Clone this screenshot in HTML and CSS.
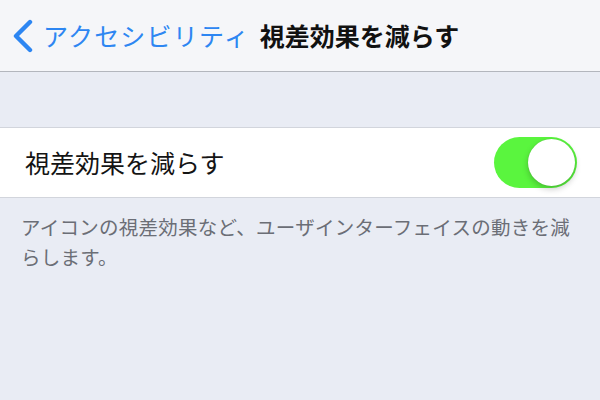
FILE: index.html
```html
<!DOCTYPE html>
<html lang="ja">
<head>
  <meta charset="UTF-8" />
  <meta name="viewport" content="width=device-width, initial-scale=1.0"/>
  <title>視差効果を減らす</title>
  <link rel="stylesheet" href="styles.css">
</head>
<body>
  <header class="navbar">
    <a class="back" href="#">
      <svg class="chevron" width="22" height="34" viewBox="0 0 22 34">
        <polyline points="18,3 4,17 18,31" fill="none" stroke="#2d86f2" stroke-width="4.4" stroke-linecap="round" stroke-linejoin="round"/>
      </svg>
      <span class="back-label">アクセシビリティ</span>
    </a>
    <h1 class="title">視差効果を減らす</h1>
  </header>
  <main>
    <div class="group">
      <div class="cell">
        <span class="cell-label">視差効果を減らす</span>
        <label class="switch">
          <input type="checkbox" checked>
          <span class="knob"></span>
        </label>
      </div>
    </div>
    <p class="footer-note">アイコンの視差効果など、ユーザインターフェイスの動きを減らします。</p>
  </main>
</body>
</html>
```

FILE: styles.css
```css
body {
  margin: 0;
  font-family: "Noto Sans CJK JP", "Noto Sans", sans-serif;
  background-color: #e9ecf4;
  color: #111;
  width: 600px;
  height: 400px;
  overflow: hidden;
}
.navbar {
  height: 72px;
  box-sizing: border-box;
  background-color: #f5f6f9;
  border-bottom: 1px solid #b3b6bd;
  display: flex;
  align-items: center;
  padding-left: 12px;
  gap: 10px;
}
.back {
  display: flex;
  align-items: center;
  gap: 9px;
  text-decoration: none;
  color: #2d86f2;
}
.chevron {
  display: block;
}
.back-label {
  font-size: 25px;
  line-height: 1;
  letter-spacing: 1.2px;
}
.title {
  margin: 0;
  font-size: 25px;
  font-weight: 700;
  line-height: 1;
  color: #111;
}
main {
  padding-top: 55px;
}
.group {
  background-color: white;
  border-top: 1px solid #d2d5dc;
  border-bottom: 1px solid #d2d5dc;
}
.cell {
  height: 69px;
  display: flex;
  align-items: center;
  justify-content: space-between;
  padding: 0 23px 0 25px;
}
.cell-label {
  font-size: 25px;
  line-height: 1;
  color: #141414;
}
.switch {
  position: relative;
  width: 83px;
  height: 51px;
  display: block;
}
.switch input {
  display: none;
}
.switch .knob {
  position: absolute;
  inset: 0;
  border-radius: 26px;
  background-color: #5af53e;
}
.switch .knob::after {
  content: "";
  position: absolute;
  top: 2px;
  right: 2px;
  width: 47px;
  height: 47px;
  border-radius: 50%;
  background-color: white;
  box-shadow: 0 3px 6px rgba(0, 0, 0, 0.22), 0 0 1px rgba(0, 0, 0, 0.2);
}
.footer-note {
  margin: 0;
  padding: 14px 26px 0 21px;
  font-size: 19.5px;
  line-height: 30px;
  letter-spacing: 0.25px;
  color: #6b6e76;
}
```
